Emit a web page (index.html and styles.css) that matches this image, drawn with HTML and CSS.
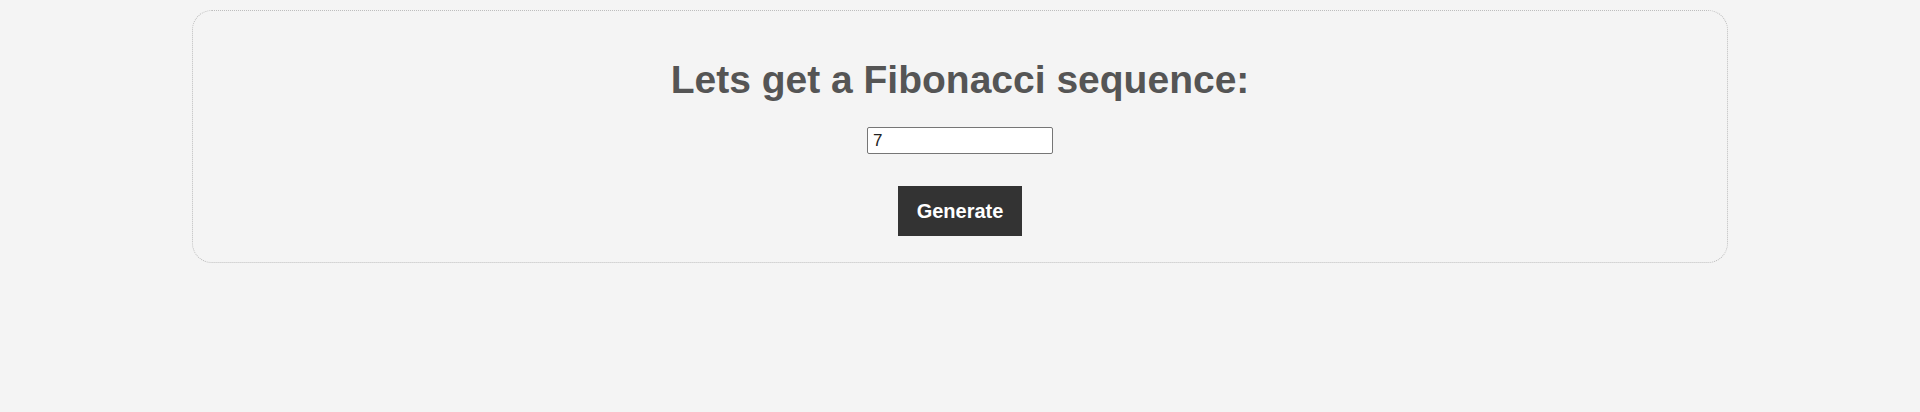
FILE: index.html
```html
<!DOCTYPE html>
<html lang="en">
<head>
<meta charset="utf-8">
<title>Fibonacci</title>
<link rel="stylesheet" href="styles.css">
</head>
<body>
  <div class="card">
    <h1 class="title">Lets get a Fibonacci sequence:</h1>
    <input class="num-input" type="text" value="7">
    <button class="gen-btn">Generate</button>
  </div>
</body>
</html>
```
FILE: styles.css
```css
html, body {
  margin: 0;
  padding: 0;
  background: #f4f4f4;
}
body {
  font-family: "Liberation Sans", Arial, sans-serif;
  padding-top: 10px;
}
.card {
  width: 1536px;
  box-sizing: border-box;
  margin: 0 auto;
  border: 1px dotted #bdbdbd;
  border-radius: 20px;
  padding: 20px 0 26px;
  display: flex;
  flex-direction: column;
  align-items: center;
}
.title {
  margin: 26px 0 24px;
  font-size: 39px;
  line-height: 46px;
  font-weight: bold;
  color: #555;
}
.num-input {
  box-sizing: border-box;
  width: 186px;
  height: 27px;
  border: 1px solid #767676;
  border-radius: 2px;
  padding: 1px 5px;
  font-family: "Liberation Sans", Arial, sans-serif;
  font-size: 17px;
  font-weight: normal;
  color: #222;
  background: #fff;
}
.gen-btn {
  margin-top: 32px;
  width: 124px;
  height: 50px;
  background: #333;
  color: #fff;
  border: none;
  font-family: "Liberation Sans", Arial, sans-serif;
  font-size: 20px;
  font-weight: bold;
}
```
